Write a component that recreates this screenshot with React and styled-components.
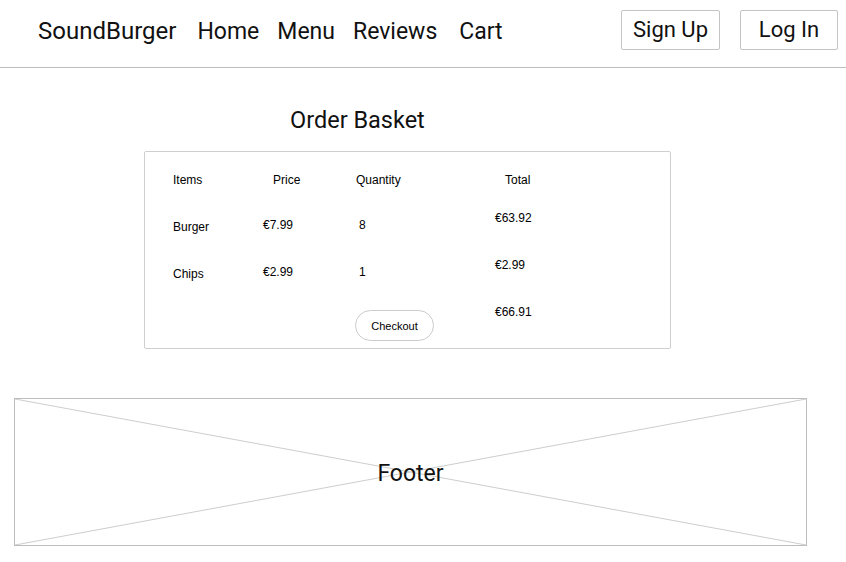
import React from "react";
import styled, { createGlobalStyle } from "styled-components";

const GlobalStyle = createGlobalStyle`
    body {
        margin: 0;
        background: #ffffff;
        font-family: Roboto, "Liberation Sans", sans-serif;
        color: #111111;
    }
`

const Page = styled.div`
    width: 846px;
    min-height: 562px;
    display: flex;
    flex-direction: column;
`

const Header = styled.header`
    height: 68px;
    box-sizing: border-box;
    border-bottom: 1px solid #bdbdbd;
    display: flex;
    align-items: center;
    padding: 0 8px 5px 38px;
`

const Brand = styled.div`
    font-size: 24px;
    margin-right: 21px;
`

const Nav = styled.nav`
    display: flex;
    gap: 18px;
    flex: 1;
`

const NavLink = styled.a`
    font-size: 23px;
    color: #111111;
    text-decoration: none;
    margin-left: ${p => p.$extra || 0}px;
`

const AuthRow = styled.div`
    display: flex;
    gap: 20px;
    margin-top: -3px;
`

const AuthButton = styled.button`
    width: ${p => p.$w}px;
    height: 40px;
    border: 1px solid #c4c4c4;
    border-radius: 2px;
    background: #ffffff;
    font-family: Roboto, sans-serif;
    font-size: 22px;
    color: #111111;
    padding: 0;
`

const Main = styled.main`
    display: flex;
    flex-direction: column;
    align-items: flex-start;
    padding-left: 144px;
`

const Title = styled.h1`
    margin: 38px 0 0 146px;
    font-size: 23.5px;
    font-weight: 400;
    line-height: 28px;
`

const Card = styled.div`
    margin-top: 17px;
    width: 527px;
    box-sizing: border-box;
    border: 1px solid #cfcfcf;
    border-radius: 2px;
    padding: 21px 0 7px 28px;
    display: grid;
    grid-template-columns: 90px 92px 140px 1fr;
    grid-template-rows: 47px 47px 47px auto;
    align-items: start;
    font-family: "Liberation Sans", Arial, sans-serif;
    font-size: 12px;
    line-height: 14px;
    color: #000000;
`

const Cell = styled.div`
    padding-left: ${p => p.$x || 0}px;
    margin-top: ${p => p.$y || 0}px;
    font-weight: ${p => (p.$head ? 500 : 400)};
`

const CheckoutButton = styled.button`
    justify-self: start;
    margin-top: -4px;
    width: 79px;
    height: 31px;
    border: 1px solid #cccccc;
    border-radius: 16px;
    background: #ffffff;
    font-family: "Liberation Sans", Arial, sans-serif;
    font-size: 11px;
    color: #000000;
    padding: 0;
`

const Footer = styled.footer`
    position: relative;
    margin: 49px 0 0 14px;
    width: 793px;
    height: 148px;
    box-sizing: border-box;
    border: 1px solid #bdbdbd;
    display: flex;
    align-items: center;
    justify-content: center;
`

const Cross = styled.svg`
    position: absolute;
    inset: 0;
    width: 100%;
    height: 100%;
`

const FooterLabel = styled.span`
    position: relative;
    font-size: 23px;
    margin-top: 2px;
`

const rows = [
    { item: "Burger", price: "€7.99", qty: "8", total: "€63.92" },
    { item: "Chips", price: "€2.99", qty: "1", total: "€2.99" },
];

function App() {
    return (
        <Page>
            <GlobalStyle />
            <Header>
                <Brand>SoundBurger</Brand>
                <Nav>
                    <NavLink href="#">Home</NavLink>
                    <NavLink href="#">Menu</NavLink>
                    <NavLink href="#">Reviews</NavLink>
                    <NavLink href="#" $extra={4}>Cart</NavLink>
                </Nav>
                <AuthRow>
                    <AuthButton $w={99}>Sign Up</AuthButton>
                    <AuthButton $w={98}>Log In</AuthButton>
                </AuthRow>
            </Header>
            <Main>
                <Title>Order Basket</Title>
                <Card>
                    <Cell $head>Items</Cell>
                    <Cell $head $x={10}>Price</Cell>
                    <Cell $head $x={1}>Quantity</Cell>
                    <Cell $head $x={10}>Total</Cell>
                    {rows.map(r => (
                        <React.Fragment key={r.item}>
                            <Cell>{r.item}</Cell>
                            <Cell $y={-2}>{r.price}</Cell>
                            <Cell $x={4} $y={-2}>{r.qty}</Cell>
                            <Cell $y={-9}>{r.total}</Cell>
                        </React.Fragment>
                    ))}
                    <span />
                    <span />
                    <CheckoutButton>Checkout</CheckoutButton>
                    <Cell $y={-9}>€66.91</Cell>
                </Card>
            </Main>
            <Footer>
                <Cross viewBox="0 0 793 148" preserveAspectRatio="none">
                    <line x1="0" y1="0" x2="793" y2="148" stroke="#cccccc" strokeWidth="1" />
                    <line x1="793" y1="0" x2="0" y2="148" stroke="#cccccc" strokeWidth="1" />
                </Cross>
                <FooterLabel>Footer</FooterLabel>
            </Footer>
        </Page>
    );
}

export default App;
